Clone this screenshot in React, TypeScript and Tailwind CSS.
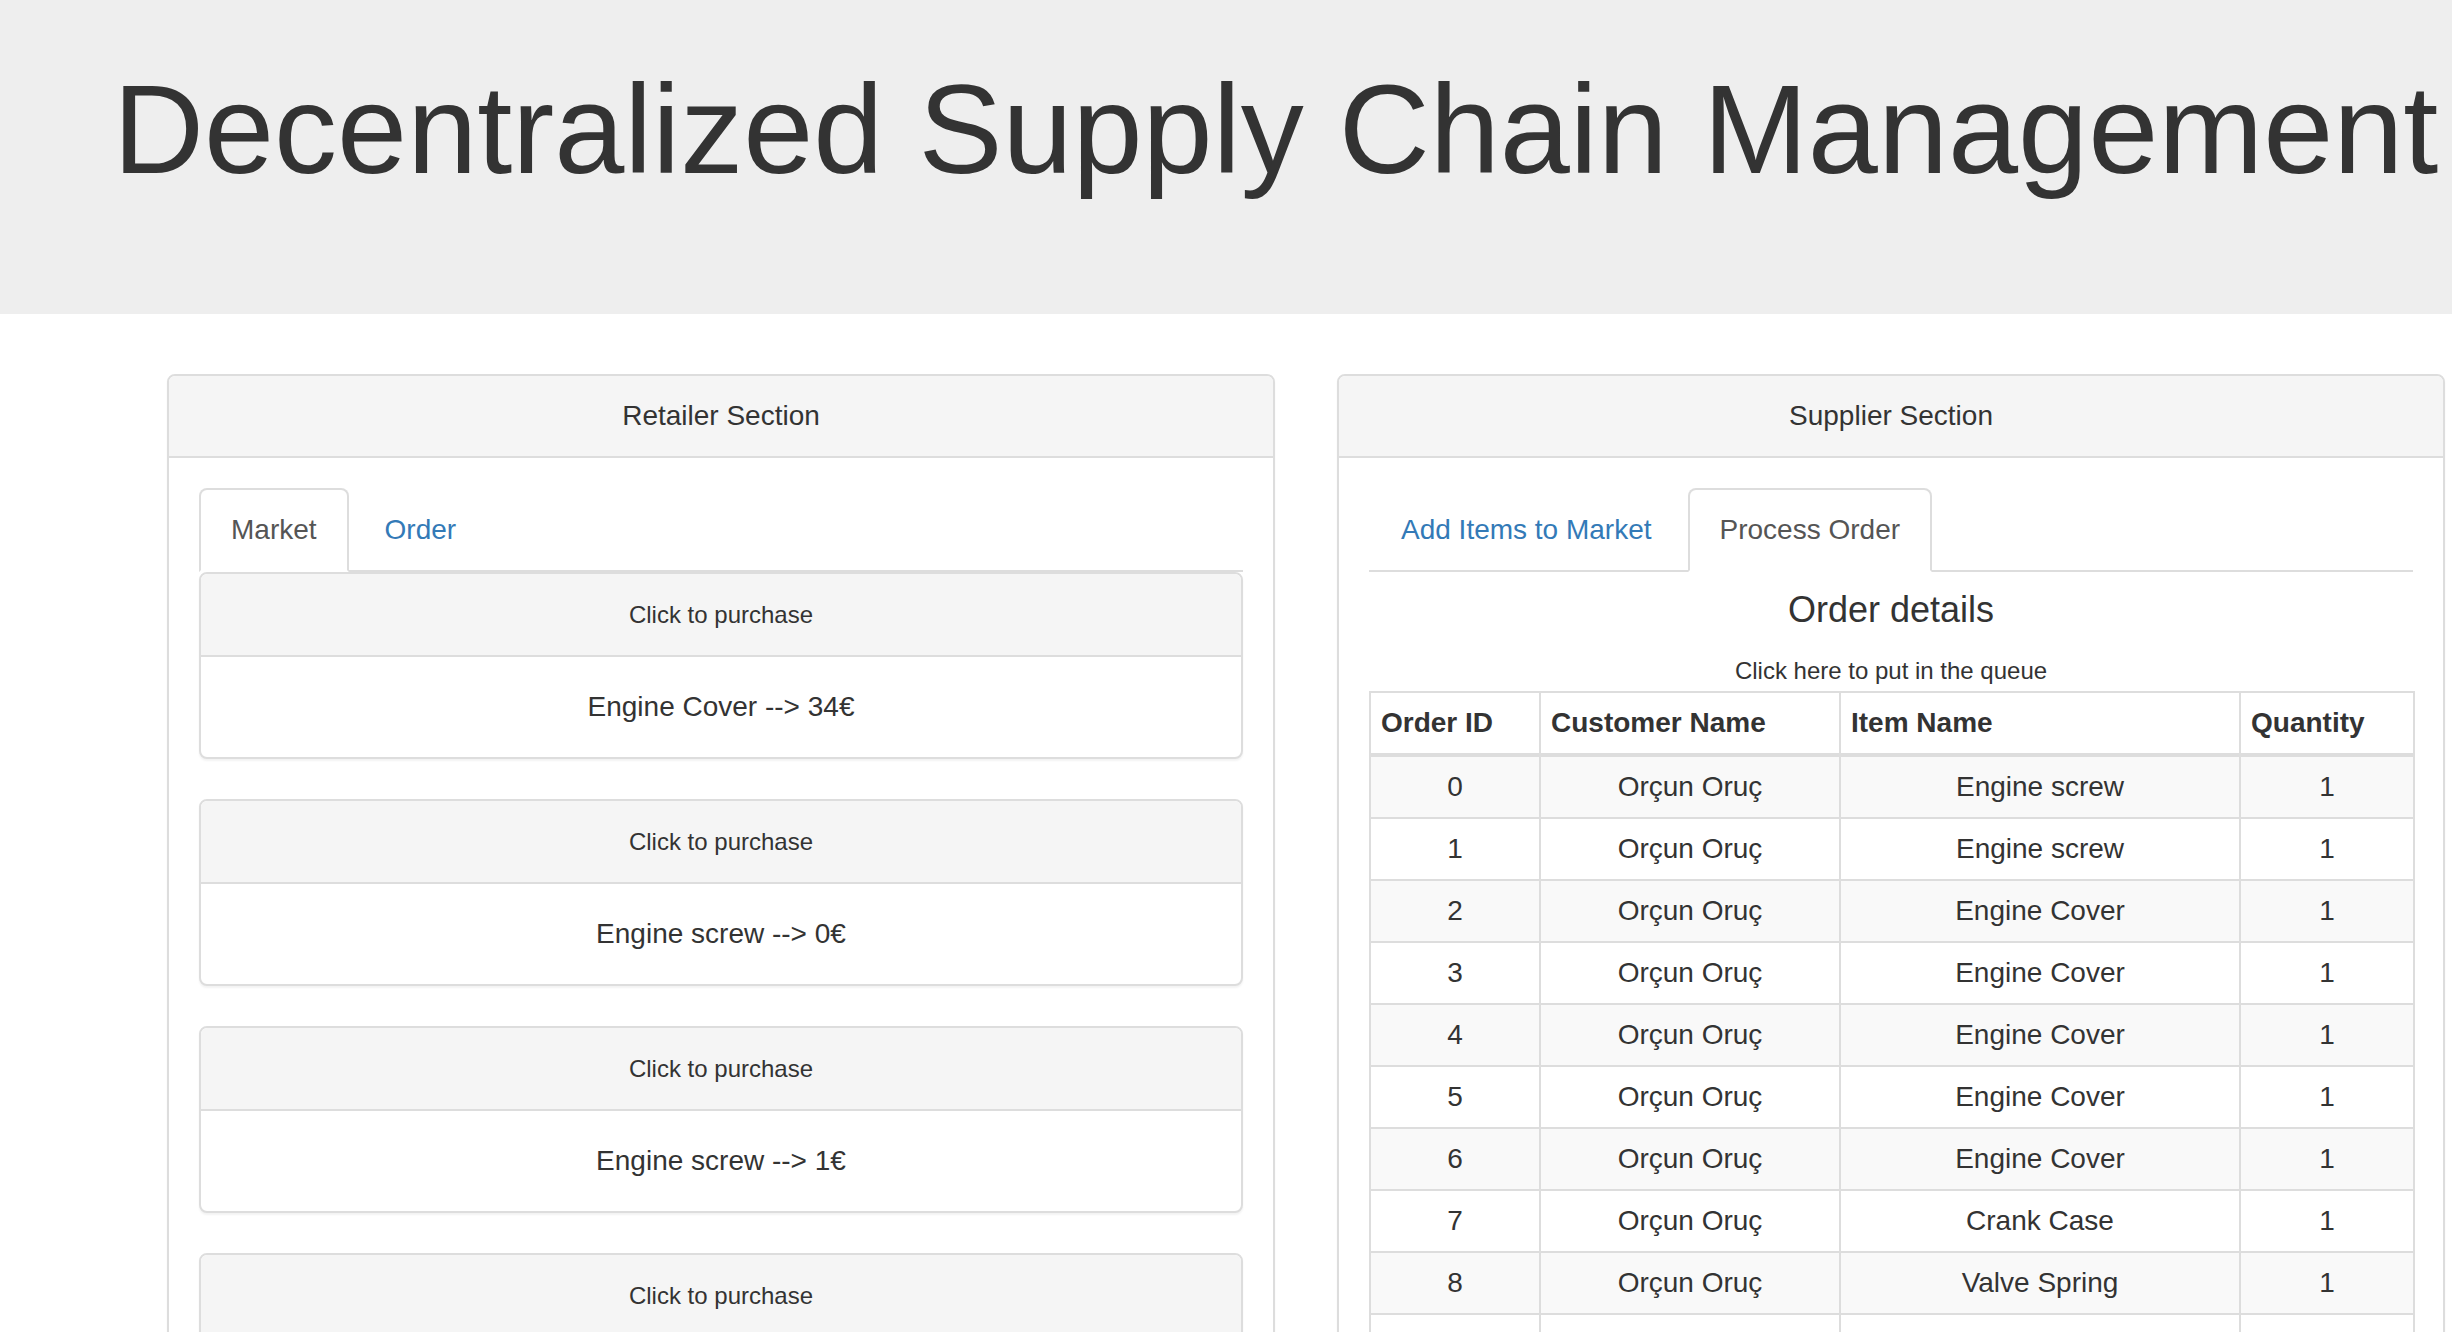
import React from "react";

const items = [
  "Engine Cover --> 34€",
  "Engine screw --> 0€",
  "Engine screw --> 1€",
  "Crank Case --> 12€",
  "Valve Spring --> 3€",
];

const orders = [
  ["0", "Orçun Oruç", "Engine screw", "1"],
  ["1", "Orçun Oruç", "Engine screw", "1"],
  ["2", "Orçun Oruç", "Engine Cover", "1"],
  ["3", "Orçun Oruç", "Engine Cover", "1"],
  ["4", "Orçun Oruç", "Engine Cover", "1"],
  ["5", "Orçun Oruç", "Engine Cover", "1"],
  ["6", "Orçun Oruç", "Engine Cover", "1"],
  ["7", "Orçun Oruç", "Crank Case", "1"],
  ["8", "Orçun Oruç", "Valve Spring", "1"],
  ["9", "Orçun Oruç", "Valve Spring", "1"],
];

function Tab({ label, active }: { label: string; active?: boolean }) {
  return (
    <div
      className={
        active
          ? "-mb-[2px] mr-[4px] rounded-t-[8px] border-2 border-[#dddddd] border-b-transparent bg-white px-[30px] py-[20px] text-[28px] leading-[40px] text-[#555555]"
          : "-mb-[2px] mr-[4px] rounded-t-[8px] border-2 border-transparent px-[30px] py-[20px] text-[28px] leading-[40px] text-[#337ab7]"
      }
    >
      {label}
    </div>
  );
}

function Panel({ title, children }: { title: string; children: React.ReactNode }) {
  return (
    <div className="w-[1108px] shrink-0 rounded-[8px] border-2 border-[#dddddd] bg-white shadow-[0_2px_2px_rgba(0,0,0,0.05)]">
      <div className="rounded-t-[6px] border-b-2 border-[#dddddd] bg-[#f5f5f5] py-[20px] text-center text-[28px] leading-[40px] text-[#333333]">
        {title}
      </div>
      <div className="p-[30px]">{children}</div>
    </div>
  );
}

export default function App() {
  return (
    <div className="min-h-screen bg-white text-[#333333] font-['Liberation_Sans',Arial,Helvetica,sans-serif]">
      <div className="h-[314px] bg-[#eeeeee] pl-[113px] pt-[61px]">
        <h1 className="whitespace-nowrap text-[126px] font-normal leading-[138.6px] text-[#333333]">
          Decentralized Supply Chain Management
        </h1>
      </div>

      <div className="mt-[60px] flex gap-[62px] pl-[167px]">
        <Panel title="Retailer Section">
          <div className="flex border-b-2 border-[#dddddd]">
            <Tab label="Market" active />
            <Tab label="Order" />
          </div>
          <div>
            {items.map((it, i) => (
              <div
                key={i}
                className="mb-[40px] rounded-[8px] border-2 border-[#dddddd] bg-white shadow-[0_2px_2px_rgba(0,0,0,0.05)]"
              >
                <div className="rounded-t-[6px] border-b-2 border-[#dddddd] bg-[#f5f5f5] py-[20px] text-center text-[28px] leading-[40px]">
                  <span className="text-[24px]">Click to purchase</span>
                </div>
                <div className="p-[30px] text-center text-[28px] leading-[40px]">{it}</div>
              </div>
            ))}
          </div>
        </Panel>

        <Panel title="Supplier Section">
          <div className="flex border-b-2 border-[#dddddd]">
            <Tab label="Add Items to Market" />
            <Tab label="Process Order" active />
          </div>
          <h4 className="mb-[20px] mt-[18px] text-center text-[36px] font-normal leading-[39.6px]">
            Order details
          </h4>
          <div className="text-center text-[28px] leading-[40px]">
            <span className="text-[24px]">Click here to put in the queue</span>
          </div>
          <table className="w-full table-fixed border-collapse border-2 border-[#dddddd] text-[28px] leading-[40px]">
            <thead>
              <tr>
                <th className="w-[170px] border-2 border-b-4 border-[#dddddd] px-[10px] py-[10px] text-left font-bold">
                  Order ID
                </th>
                <th className="w-[300px] border-2 border-b-4 border-[#dddddd] px-[10px] py-[10px] text-left font-bold">
                  Customer Name
                </th>
                <th className="w-[400px] border-2 border-b-4 border-[#dddddd] px-[10px] py-[10px] text-left font-bold">
                  Item Name
                </th>
                <th className="w-[174px] border-2 border-b-4 border-[#dddddd] px-[10px] py-[10px] text-left font-bold">
                  Quantity
                </th>
              </tr>
            </thead>
            <tbody>
              {orders.map((r, i) => (
                <tr key={i} className={i % 2 === 0 ? "bg-[#f9f9f9]" : "bg-white"}>
                  {r.map((c, j) => (
                    <td key={j} className="border-2 border-[#dddddd] px-[10px] py-[10px] text-center">
                      {c}
                    </td>
                  ))}
                </tr>
              ))}
            </tbody>
          </table>
        </Panel>
      </div>
    </div>
  );
}
